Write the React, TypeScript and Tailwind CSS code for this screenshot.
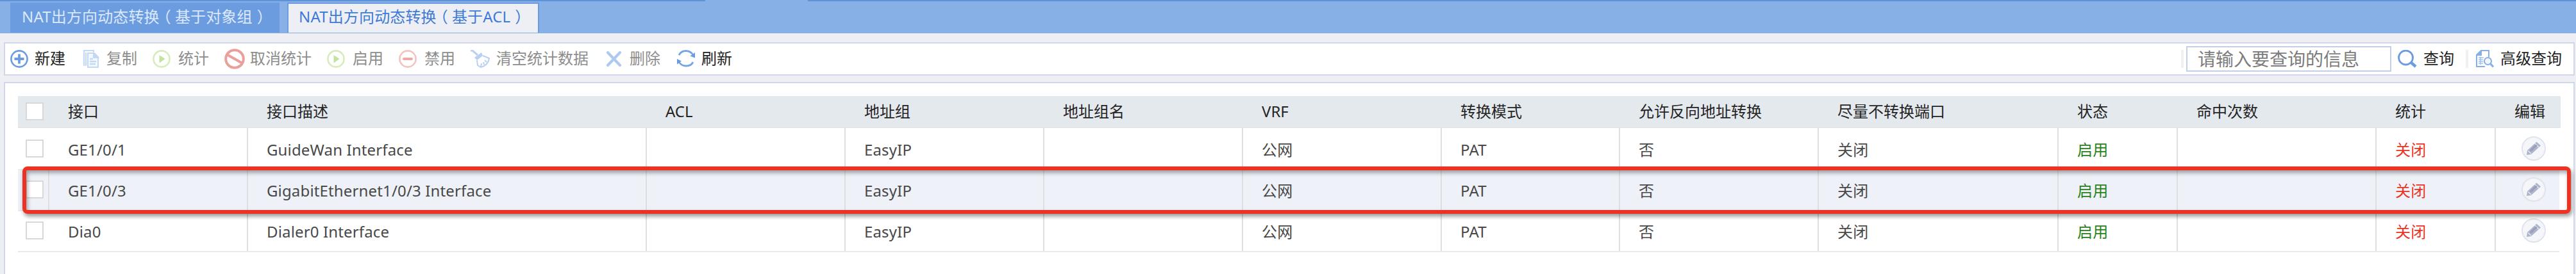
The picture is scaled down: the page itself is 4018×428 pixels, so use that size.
import type { ReactNode } from "react";

type Tool = { label: string; icon: ReactNode; width: string; iconPad: string; active?: boolean };

const PlusIcon = () => (
  <svg width="28" height="28" viewBox="0 0 28 28" fill="none" stroke="#6b9ce0">
    <circle cx="14" cy="14" r="12.6" strokeWidth="2.6" />
    <path d="M14 6.500v15M6.500 14h15" strokeWidth="3.8" />
  </svg>
);

const CopyIcon = () => (
  <svg width="25" height="28" viewBox="0 0 25 28" fill="none" stroke="#c3d8f5" strokeWidth="2">
    <path d="M1 25V1h15v2M4 25V4" />
    <path d="M7 5h10l6 6v16H7z" fill="#f4f8fe" />
    <path d="M16 5v7h7z" fill="#c3d8f5" />
    <path d="M10 14h5M10 18h10M10 22h9" strokeWidth="2.4" />
  </svg>
);

const PlayIcon = () => (
  <svg width="28" height="28" viewBox="0 0 28 28">
    <circle cx="14" cy="14" r="12.6" fill="none" stroke="#d6ecba" strokeWidth="2.6" />
    <path d="M10.500 8l9 6-9 6.500z" fill="#c3e29a" />
  </svg>
);

const BanIcon = () => (
  <svg width="32" height="32" viewBox="0 0 32 32" fill="none" stroke="#eb9f9b" strokeWidth="4">
    <circle cx="16" cy="16" r="13.800" />
    <path d="M4.500 9.500l23 13" />
  </svg>
);

const MinusIcon = () => (
  <svg width="28" height="28" viewBox="0 0 28 28" fill="none" stroke="#f6c2c0">
    <circle cx="14" cy="14" r="12.6" strokeWidth="2.600" />
    <path d="M8 14h12" strokeWidth="4" stroke="#f0a8a5" strokeLinecap="round" />
  </svg>
);

const BroomIcon = () => (
  <svg width="30" height="28" viewBox="0 0 30 28" fill="none" stroke="#b9d0f1" strokeWidth="2">
    <path d="M0 1h3l8 7" strokeWidth="3" />
    <path d="M6 12l11-8 2 5-9 7z" fill="#b9d0f1" stroke="none" />
    <path d="M19 9l10 4c-1 6-5 12-13 14l-5-3-1-8" />
    <path d="M16 26l1-5M21 23l-1-4M25 19l-3-3" />
  </svg>
);

const CrossIcon = () => (
  <svg width="26" height="28" viewBox="0 0 26 28" stroke="#aec9f0" strokeWidth="4.200" strokeLinecap="round">
    <path d="M4 4l19 20M23 4L4 24" />
  </svg>
);

const RefreshIcon = () => (
  <svg width="28" height="28" viewBox="0 0 28 28" fill="none" stroke="#76a4e4" strokeWidth="2.800">
    <path d="M3 8C5 4 9 1.500 14 1.500c5 0 8 2 10.500 5.500M25 19c-2 4-6 6-11 6-4.500 0-8-2-10.500-5.500" />
    <path d="M28 4v8.500l-7.500-3zM0 22.500V14l7 3.500z" fill="#6b9ce0" stroke="none" />
  </svg>
);

const SearchIcon = () => (
  <svg width="30" height="28" viewBox="0 0 30 28" fill="none" stroke="#6b9ce0">
    <circle cx="12.500" cy="12" r="11" strokeWidth="2.800" />
    <path d="M20.500 19.500l7.500 6.500" strokeWidth="4.400" />
  </svg>
);

const AdvancedIcon = () => (
  <svg width="28" height="28" viewBox="0 0 28 28" fill="none" stroke="#86afe8" strokeWidth="2">
    <path d="M20 11V1H8L1 8v18h13" />
    <path d="M8 1v7H1z" fill="#86afe8" />
    <path d="M4 12h8M4 15h7M4 18h7M4 21h7M7 11v12" strokeWidth="1.500" stroke="#a4c3ee" />
    <circle cx="18.500" cy="17.500" r="5.500" fill="#f4f8fe" />
    <path d="M22.500 21.500l4.500 5" strokeWidth="3" />
  </svg>
);

const EditIcon = () => (
  <svg width="40" height="40" viewBox="0 0 40 40">
    <circle cx="20" cy="20" r="18" fill="#f5f6fa" stroke="#e0e3ec" strokeWidth="2" />
    <path d="M9 30l1-7L24.500 9.500 31 15.500 16 29z" fill="#adb4c9" />
    <path d="M11 23.500l5 4.500M22 12l6 6" stroke="#e4e7ef" strokeWidth="1.500" />
    <path d="M15 23.500l9.500-9" stroke="#969eb8" strokeWidth="3" />
  </svg>
);

const tools: Tool[] = [
  { label: "新建", icon: <PlusIcon />, width: "w-[112px]", iconPad: "pl-1", active: true },
  { label: "复制", icon: <CopyIcon />, width: "w-[112px]", iconPad: "pl-1.5" },
  { label: "统计", icon: <PlayIcon />, width: "w-[112px]", iconPad: "pl-[2px]" },
  { label: "取消统计", icon: <BanIcon />, width: "w-[160px]", iconPad: "pl-[2px]" },
  { label: "启用", icon: <PlayIcon />, width: "w-[112px]", iconPad: "pl-[2px]" },
  { label: "禁用", icon: <MinusIcon />, width: "w-[112px]", iconPad: "pl-[2px]" },
  { label: "清空统计数据", icon: <BroomIcon />, width: "w-[208px]", iconPad: "pl-[2px]" },
  { label: "删除", icon: <CrossIcon />, width: "w-[112px]", iconPad: "pl-1" },
  { label: "刷新", icon: <RefreshIcon />, width: "w-[112px]", iconPad: "pl-1", active: true },
];

const columns = [
  "接口",
  "接口描述",
  "ACL",
  "地址组",
  "地址组名",
  "VRF",
  "转换模式",
  "允许反向地址转换",
  "尽量不转换端口",
  "状态",
  "命中次数",
  "统计",
  "编辑",
];

const rows = [
  ["GE1/0/1", "GuideWan Interface", "", "EasyIP", "", "公网", "PAT", "否", "关闭", "启用", "", "关闭"],
  ["GE1/0/3", "GigabitEthernet1/0/3 Interface", "", "EasyIP", "", "公网", "PAT", "否", "关闭", "启用", "", "关闭"],
  ["Dia0", "Dialer0 Interface", "", "EasyIP", "", "公网", "PAT", "否", "关闭", "启用", "", "关闭"],
];

const grid =
  "grid grid-cols-[49px_310px_622px_310px_310px_310px_310px_278px_310px_374px_186px_310px_186px_99px]";

const Checkbox = () => (
  <span className="block h-7 w-7 border-2 border-[#d8d8d8] bg-white" />
);

const cellColor = (col: number) => {
  if (col === 9) return "text-[#2a8219]";
  if (col === 11) return "text-[#ea3323]";
  return "text-[#484848]";
};

// full-width brackets sit in the middle of their cell
const TabTitle = ({ name, scope }: { name: string; scope: string }) => (
  <>
    {name}
    <span className="inline-block -translate-x-1.5">（</span>
    {scope}
    <span className="inline-block translate-x-[7px]">）</span>
  </>
);

const Tabs = () => (
  <div className="h-[52px] bg-[#87b1e6]">
    <div className="flex h-0.5 justify-between">
      <span className="w-[1100px] bg-[#5e92d8]" />
      <span className="w-[2758px] bg-[#5e92d8]" />
    </div>
    <div className="flex pt-0.5 pl-4 tracking-[0.15px] whitespace-nowrap">
      <div className="h-[47px] w-[420px] bg-[#6b9ce0] pl-[18px] leading-[44px] text-[#dbe8fa]">
        <TabTitle name="NAT出方向动态转换" scope="基于对象组" />
      </div>
      <div className="ml-3 h-[47px] w-[393px] border-x-2 border-t-2 border-[#6b9ce0] bg-[#eeeff4] pl-4 leading-[40px] text-[#3e7bd6]">
        <TabTitle name="NAT出方向动态转换" scope="基于ACL" />
      </div>
    </div>
  </div>
);

const Toolbar = () => (
  <div className="mt-3.5 mr-0.5 ml-1.5 flex h-[52px] items-center justify-between border-2 border-[#d1d7e9] bg-white">
    <div className="flex h-full items-center pl-1">
      {tools.map((tool, i) => (
        <div key={i} className={`flex h-full shrink-0 items-center ${tool.width}`}>
          <span className={`flex w-[42px] shrink-0 items-center ${tool.iconPad}`}>{tool.icon}</span>
          <span className={`pb-0.5 whitespace-nowrap ${tool.active ? "text-[#1f1f1f]" : "text-[#8d8d8d]"}`}>
            {tool.label}
          </span>
        </div>
      ))}
    </div>
    <div className="flex h-full items-center pr-[18px]">
      <span className="mr-1 h-7 w-1 bg-[#f0f0f0]" />
      <div className="h-10 w-80 border-2 border-[#c3cfe6] pl-4 text-[28px] leading-[36px] text-[#7c7c7c]">
        请输入要查询的信息
      </div>
      <span className="ml-2.5">
        <SearchIcon />
      </span>
      <span className="ml-2.5 pb-0.5 text-[#1f1f1f]">查询</span>
      <span className="mr-3 ml-[18px] h-7 w-1 bg-[#f0f0f0]" />
      <AdvancedIcon />
      <span className="ml-2.5 pb-0.5 text-[#1f1f1f]">高级查询</span>
    </div>
  </div>
);

const NatTable = () => (
  <div className="relative w-[3964px]">
    <div className={`${grid} h-[50px] w-[3966px] border-b border-[#dfe3e6] bg-[#e4e9ee] text-[#242424]`}>
      <div className="pt-2.5 pl-3">
        <Checkbox />
      </div>
      {columns.map((title) => (
        <div key={title} className="pl-[29px] leading-[48px] whitespace-nowrap">
          {title}
        </div>
      ))}
    </div>
    {rows.map((row, i) => (
      <div
        key={i}
        className={`${grid} overflow-hidden border-b-2 border-[#e9e9eb] ${i === 0 ? "h-[66px]" : "h-16"} ${
          i === 1 ? "bg-[#eef1f8]" : "bg-white"
        }`}
      >
        <div className={`pl-3 ${i === 0 ? "pt-[18px]" : "pt-4"} ${i === 1 ? "border-r-2 border-[#e0e0e2]" : ""}`}>
          <Checkbox />
        </div>
        {row.map((cell, col) => (
          <div
            key={col}
            className={`border-r-2 border-[#dfdfe1] pl-[29px] tracking-[0.15px] whitespace-nowrap ${
              i === 0 ? "leading-[68px]" : "leading-[64px]"
            } ${cellColor(col)}`}
          >
            {cell}
          </div>
        ))}
        <div className={`pl-[39px] ${i === 0 ? "pt-3" : "pt-2.5"}`}>
          <EditIcon />
        </div>
      </div>
    ))}
    <div className="absolute top-[110px] left-[7px] h-[74px] w-[3975px] rounded-lg border-6 border-[#ea3323] shadow-[2px_4px_6px_rgba(0,0,0,0.4),inset_2px_4px_6px_rgba(0,0,0,0.35)]" />
  </div>
);

export default function App() {
  return (
    <div className="h-[428px] w-[4018px] overflow-hidden bg-[#eeeff4] font-['Noto_Sans','Noto_Sans_CJK_SC',sans-serif] text-2xl">
      <Tabs />
      <Toolbar />
      <div className="mt-2.5 mr-0.5 ml-1.5 h-[310px] border-2 border-[#d1d7e9] bg-white pt-5 pl-5">
        <NatTable />
      </div>
    </div>
  );
}
